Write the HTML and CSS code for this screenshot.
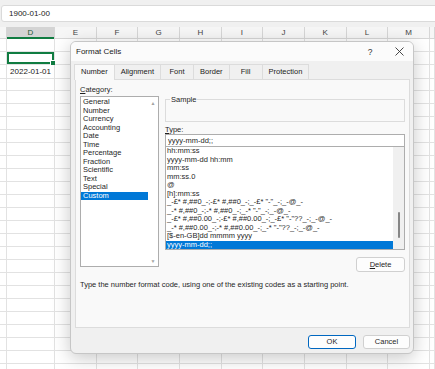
FILE: index.html
```html
<!DOCTYPE html>
<html lang="en">

<head>
  <meta charset="UTF-8">
  <meta name="viewport" content="width=device-width, initial-scale=1.0">
  <title>Format Cells</title>
  <link rel="stylesheet" href="styles.css">
</head>

<body>

  <div class="sheet">
    <div class="topbar">
      <div class="formula">1900-01-00</div>
    </div>
    <div class="heads">
      <div class="head"></div>
      <div class="head head-active">D</div>
      <div class="head">E</div>
      <div class="head">F</div>
      <div class="head">G</div>
      <div class="head">H</div>
      <div class="head">I</div>
      <div class="head">J</div>
      <div class="head">K</div>
      <div class="head">L</div>
      <div class="head">M</div>
      <div class="head"></div>
    </div>
    <div class="rows" id="rows"></div>
  </div>

  <div class="dialog">
    <div class="titlebar">
      <span class="title">Format Cells</span>
      <span class="help">?</span>
      <span class="close">
        <svg width="9" height="9" viewBox="0 0 9 9">
          <path d="M0.5 0.5 L8.5 8.5 M8.5 0.5 L0.5 8.5" stroke="#333" stroke-width="0.9" fill="none" />
        </svg>
      </span>
    </div>

    <div class="tabs">
      <div class="tab tab-active">Number</div>
      <div class="tab">Alignment</div>
      <div class="tab">Font</div>
      <div class="tab">Border</div>
      <div class="tab">Fill</div>
      <div class="tab">Protection</div>
    </div>

    <div class="panel">
      <div class="panel-top">
        <div class="left-col">
          <div class="label"><u>C</u>ategory:</div>
          <div class="cat-list">
            <div class="cat-items">
              <div class="item">General</div>
              <div class="item">Number</div>
              <div class="item">Currency</div>
              <div class="item">Accounting</div>
              <div class="item">Date</div>
              <div class="item">Time</div>
              <div class="item">Percentage</div>
              <div class="item">Fraction</div>
              <div class="item">Scientific</div>
              <div class="item">Text</div>
              <div class="item">Special</div>
              <div class="item item-selected">Custom</div>
            </div>
            <div class="cat-scroll">
              <span class="arrow">&#9650;</span>
              <span class="arrow">&#9660;</span>
            </div>
          </div>
        </div>

        <div class="right-col">
          <div class="sample">
            <span class="sample-label">Sample</span>
          </div>
          <div class="label type-label"><u>T</u>ype:</div>
          <div class="type-input">yyyy-mm-dd;;</div>
          <div class="type-list">
            <div class="type-items">
              <div class="item">hh:mm:ss</div>
              <div class="item">yyyy-mm-dd hh:mm</div>
              <div class="item">mm:ss</div>
              <div class="item">mm:ss.0</div>
              <div class="item">@</div>
              <div class="item">[h]:mm:ss</div>
              <div class="item">_-£* #,##0_-;-£* #,##0_-;_-£* "-"_-;_-@_-</div>
              <div class="item">_-* #,##0_-;-* #,##0_-;_-* "-"_-;_-@_-</div>
              <div class="item">_-£* #,##0.00_-;-£* #,##0.00_-;_-£* "-"??_-;_-@_-</div>
              <div class="item">_-* #,##0.00_-;-* #,##0.00_-;_-* "-"??_-;_-@_-</div>
              <div class="item">[$-en-GB]dd mmmm yyyy</div>
              <div class="item item-selected">yyyy-mm-dd;;</div>
            </div>
            <div class="type-scroll">
              <div class="thumb"></div>
            </div>
          </div>
          <div class="btn btn-delete"><u>D</u>elete</div>
        </div>
      </div>

      <div class="hint">Type the number format code, using one of the existing codes as a starting point.</div>
    </div>

    <div class="footer">
      <div class="btn btn-ok">OK</div>
      <div class="btn">Cancel</div>
    </div>
  </div>

  <script>
    const rows = document.getElementById('rows')

    for (let r = 0; r < 26; r++) {
      const row = document.createElement('div')
      row.className = 'row'
      for (let c = 0; c < 12; c++) {
        const cell = document.createElement('div')
        cell.className = 'cell'
        row.appendChild(cell)
      }
      rows.appendChild(row)
    }

    rows.children[1].children[1].classList.add('cell-active')
    rows.children[2].children[1].innerText = '2022-01-01'
  </script>
</body>

</html>
```

FILE: styles.css
```css
body {
  margin: 0;
  background: #fff;
  font-family: "Liberation Sans", Arial, sans-serif;
  color: #1f1f1f;
  overflow: hidden;
}

/* spreadsheet behind the dialog */

.topbar {
  height: 27px;
  padding-top: 5px;
  box-sizing: border-box;
  background: #f0f0f0;
}

.formula {
  height: 17px;
  margin: 0 -4px 0 1px;
  padding-left: 7px;
  box-sizing: border-box;
  background: #fff;
  border: 1px solid #dadada;
  border-radius: 3px;
  font-size: 8px;
  line-height: 15px;
  color: #222;
}

.heads,
.row {
  display: grid;
  grid-template-columns: 7px 48px repeat(9, 41.67px) 1fr;
}

.heads {
  height: 12px;
  background: #f6f6f6;
  border-bottom: 1px solid #d6d6d6;
  box-sizing: border-box;
}

.head {
  border-right: 1px solid #d6d6d6;
  font-size: 8px;
  line-height: 12px;
  text-align: center;
  color: #444;
}

.head-active {
  background: #d4d4d4;
  color: #1d5a34;
  box-shadow: inset 0 -2px 0 #107c41;
}

.row {
  height: 13px;
}

.cell {
  position: relative;
  border-right: 1px solid #e2e2e2;
  border-bottom: 1px solid #e2e2e2;
  font-size: 8px;
  line-height: 13px;
  text-align: right;
  padding-right: 3px;
  color: #222;
}

.cell-active {
  box-shadow: inset 0 0 0 2px #107c41;
}

.cell-active::after {
  content: "";
  position: absolute;
  right: -2px;
  bottom: -2px;
  width: 4px;
  height: 4px;
  background: #107c41;
  border: 1px solid #fff;
}

/* dialog */

.dialog {
  position: absolute;
  left: 70px;
  top: 41px;
  width: 344px;
  height: 313px;
  box-sizing: border-box;
  background: #f0f0f0;
  border: 1px solid #c6c6c6;
  border-radius: 6px;
  box-shadow: 0 4px 18px rgba(0, 0, 0, 0.22);
  font-size: 7.5px;
  overflow: hidden;
}

.titlebar {
  height: 19px;
  display: flex;
  align-items: center;
  background: #fbfbfb;
  padding-left: 5px;
}

.title {
  flex: 1;
  font-size: 8px;
  color: #1a1a1a;
}

.help {
  width: 10px;
  margin-right: 19px;
  text-align: center;
  font-size: 8.5px;
  color: #333;
}

.close {
  width: 10px;
  margin-right: 9px;
  display: flex;
  justify-content: center;
}

.tabs {
  display: flex;
  margin-top: 3px;
  padding-left: 3px;
  height: 15px;
}

.tab {
  min-width: 34px;
  padding: 0 6px;
  box-sizing: border-box;
  text-align: center;
  line-height: 14px;
  border: 1px solid #dcdcdc;
  border-bottom: none;
  margin-right: -1px;
  color: #222;
}

.tab-active {
  background: #f9f9f9;
  position: relative;
  z-index: 1;
  height: 16px;
}

.panel {
  height: 249px;
  margin: 0 3px 0 4px;
  padding: 5px 4px 0 4px;
  box-sizing: border-box;
  background: #f9f9f9;
  border: 1px solid #dcdcdc;
}

.panel-top {
  display: flex;
  gap: 6px;
}

.left-col {
  width: 79px;
}

.right-col {
  width: 240px;
  display: flex;
  flex-direction: column;
}

.label {
  line-height: 9px;
  color: #1f1f1f;
}

.cat-list {
  margin-top: 2px;
  height: 171px;
  box-sizing: border-box;
  border: 1px solid #adadad;
  background: #fff;
  display: flex;
}

.cat-items {
  width: 67px;
  padding-top: 1px;
}

.item {
  height: 8.5px;
  line-height: 8.5px;
  padding-left: 2px;
  white-space: nowrap;
  color: #1f1f1f;
}

.item-selected {
  background: #0078d7;
  color: #fff;
}

.cat-scroll {
  width: 10px;
  display: flex;
  flex-direction: column;
  justify-content: space-between;
  align-items: center;
  padding: 3px 0 2px;
}

.arrow {
  font-size: 5px;
  color: #a3a3a3;
}

.sample {
  margin-top: 14px;
  height: 23px;
  box-sizing: border-box;
  border: 1px solid #dcdcdc;
  padding-left: 4px;
}

.sample-label {
  display: inline-block;
  margin-top: -4px;
  padding: 0 1px;
  line-height: 8px;
  background: #f9f9f9;
  vertical-align: top;
}

.type-label {
  margin-top: 4px;
  line-height: 8px;
}

.type-input {
  height: 13px;
  box-sizing: border-box;
  border: 1px solid #adadad;
  background: #fff;
  padding-left: 2px;
  line-height: 11px;
}

.type-list {
  margin-top: -1px;
  height: 104px;
  box-sizing: border-box;
  border: 1px solid #adadad;
  background: #fff;
  display: flex;
}

.type-items {
  width: 227px;
}

.type-items .item {
  padding-left: 1px;
}

.type-scroll {
  width: 11px;
  background: #f0f0f0;
  display: flex;
  justify-content: center;
  padding-top: 65px;
  box-sizing: border-box;
}

.thumb {
  width: 2px;
  height: 26px;
  border-radius: 1px;
  background: #868686;
}

.btn {
  height: 14px;
  box-sizing: border-box;
  background: #fdfdfd;
  border: 1px solid #d0d0d0;
  border-radius: 3px;
  text-align: center;
  line-height: 12px;
  color: #1f1f1f;
}

.btn-delete {
  align-self: flex-end;
  width: 49px;
  height: 15px;
  line-height: 13px;
  margin-top: 7px;
}

.hint {
  margin-top: 8px;
  line-height: 9px;
}

.footer {
  display: flex;
  justify-content: flex-end;
  gap: 7px;
  margin-top: 7px;
  padding-right: 3px;
}

.footer .btn {
  width: 47px;
}

.footer .btn-ok {
  width: 48px;
  border-color: #0067c0;
}
```
